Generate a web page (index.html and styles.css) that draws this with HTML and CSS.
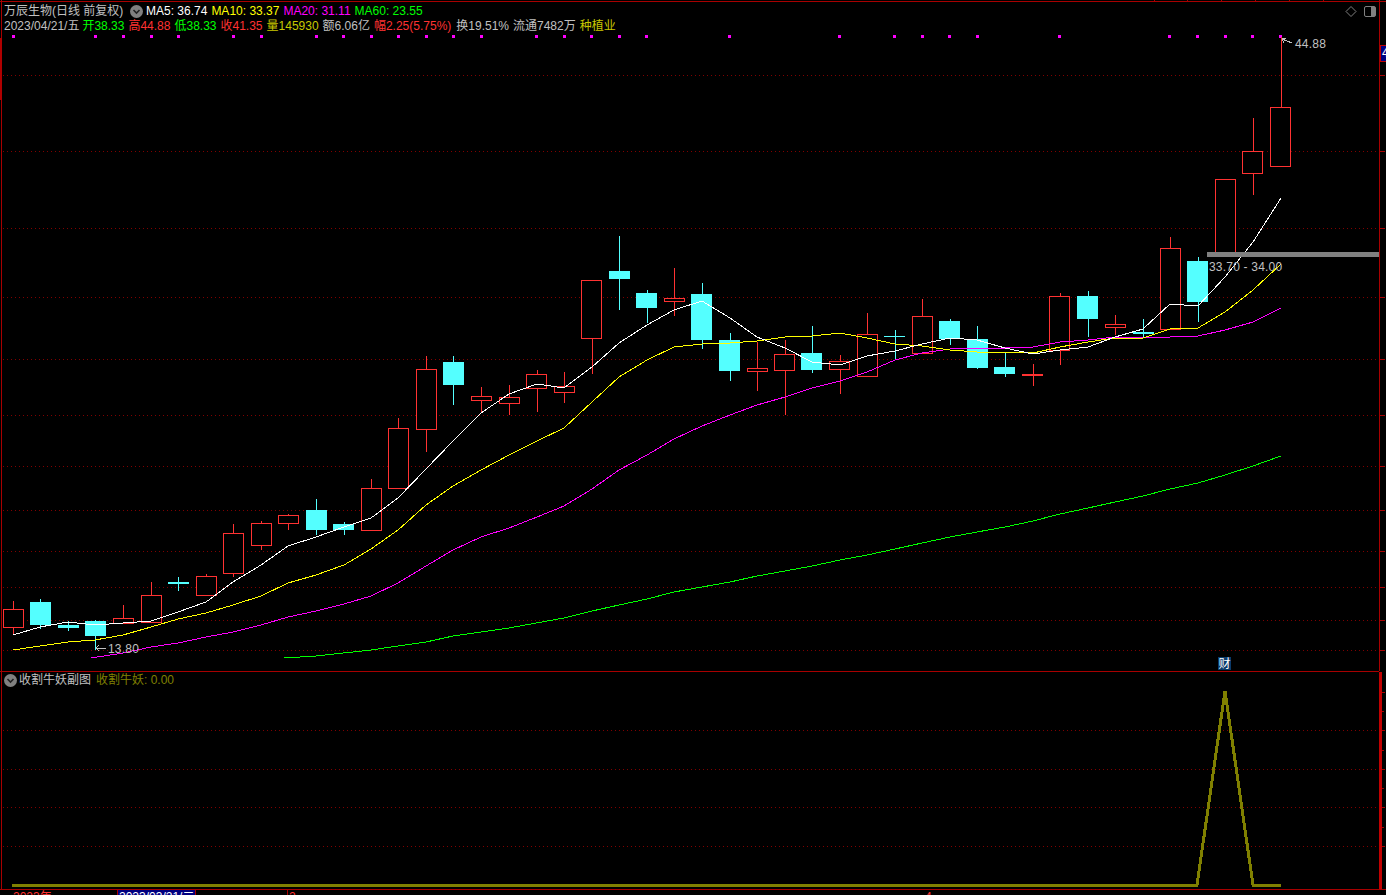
FILE: index.html
```html
<!DOCTYPE html>
<html lang="zh-CN">
<head>
<meta charset="utf-8">
<title>万辰生物 日线</title>
<link rel="stylesheet" href="styles.css">
</head>
<body>
<div class="terminal">
  <section class="panel main-panel">
    <svg class="canvas" width="1386" height="671" viewBox="0 0 1386 671" aria-hidden="true">
      <path class="frame" d="M0 1.5H1386M1379.5 0V671M1.5 0V671"/>
      <path class="frame" d="M1154.5 0V1M1187.5 0V1M1221.5 0V1M1255.5 0V1M1289.5 0V1M1323.5 0V1"/>
      <rect class="left-mark" x="0" y="38" width="2" height="62"/>
      <path class="grid" d="M3 75.5H1379M3 151.5H1379M3 228.5H1379M3 297.5H1379M3 359.5H1379M3 415.5H1379M3 466.5H1379M3 510.5H1379M3 551.5H1379M3 587.5H1379M3 620.5H1379M3 650.5H1379"/>
      <path class="frame" d="M1379 75.5H1385M1379 151.5H1385M1379 228.5H1385M1379 297.5H1385M1379 359.5H1385M1379 415.5H1385M1379 466.5H1385M1379 510.5H1385M1379 551.5H1385M1379 587.5H1385M1379 620.5H1385M1379 650.5H1385"/>
      <rect class="price-badge" x="1380" y="45" width="8" height="16"/>
      <text class="badge-text" x="1382" y="57">4</text>

      <g class="dots">
        <rect x="12" y="35" width="3" height="3"/><rect x="94" y="35" width="3" height="3"/><rect x="122" y="35" width="3" height="3"/><rect x="150" y="35" width="3" height="3"/><rect x="177" y="35" width="3" height="3"/><rect x="232" y="35" width="3" height="3"/><rect x="260" y="35" width="3" height="3"/><rect x="315" y="35" width="3" height="3"/><rect x="342" y="35" width="3" height="3"/><rect x="370" y="35" width="3" height="3"/><rect x="397" y="35" width="3" height="3"/><rect x="425" y="35" width="3" height="3"/><rect x="452" y="35" width="3" height="3"/><rect x="480" y="35" width="3" height="3"/><rect x="535" y="35" width="3" height="3"/><rect x="563" y="35" width="3" height="3"/><rect x="590" y="35" width="3" height="3"/><rect x="618" y="35" width="3" height="3"/><rect x="645" y="35" width="3" height="3"/><rect x="728" y="35" width="3" height="3"/><rect x="838" y="35" width="3" height="3"/><rect x="893" y="35" width="3" height="3"/><rect x="921" y="35" width="3" height="3"/><rect x="948" y="35" width="3" height="3"/><rect x="976" y="35" width="3" height="3"/><rect x="1058" y="35" width="3" height="3"/><rect x="1168" y="35" width="3" height="3"/><rect x="1196" y="35" width="3" height="3"/><rect x="1224" y="35" width="3" height="3"/><rect x="1251" y="35" width="3" height="3"/><rect x="1279" y="35" width="3" height="3"/>
      </g>

      <path class="wick-up" d="M13.5 601V634M123.5 605V623M151.5 582V622M206.5 574V596M233.5 524V577M261.5 521V550M288.5 514V530M371.5 479V530M398.5 418V488M426.5 356V452M481.5 387V412M509.5 385V415M537.5 370V412M564.5 372V403M592.5 280V374M674.5 268V316M757.5 342V391M785.5 340V415M840.5 355V394M867.5 313V377M922.5 299V353M1033.5 364V386M1060.5 293V365M1115.5 315V335M1170.5 237V329M1253.5 118V195M1281.5 37V107"/>
      <path class="wick-down" d="M40.5 599V629M68.5 621V631M95.5 620V650M178.5 577V591M316.5 499V535M344.5 522V535M453.5 356V405M619.5 236V310M647.5 290V323M702.5 283V349M730.5 333V381M812.5 326V373M895.5 330V359M950.5 319V345M977.5 326V369M1005.5 353V377M1088.5 291V337M1143.5 319V338M1198.5 257V322"/>

      <g class="body-up">
        <rect x="3.5" y="609.5" width="20" height="18"/>
        <rect x="113.5" y="618.5" width="20" height="5"/>
        <rect x="141.5" y="595.5" width="20" height="27"/>
        <rect x="196.5" y="576.5" width="20" height="19"/>
        <rect x="223.5" y="533.5" width="20" height="40"/>
        <rect x="251.5" y="523.5" width="20" height="22"/>
        <rect x="278.5" y="515.5" width="20" height="8"/>
        <rect x="361.5" y="488.5" width="20" height="42"/>
        <rect x="388.5" y="428.5" width="20" height="60"/>
        <rect x="416.5" y="369.5" width="20" height="60"/>
        <rect x="471.5" y="396.5" width="20" height="4"/>
        <rect x="499.5" y="397.5" width="20" height="6"/>
        <rect x="526.5" y="374.5" width="20" height="14"/>
        <rect x="554.5" y="386.5" width="20" height="6"/>
        <rect x="581.5" y="280.5" width="20" height="58"/>
        <rect x="664.5" y="298.5" width="20" height="3"/>
        <rect x="747.5" y="368.5" width="20" height="3"/>
        <rect x="774.5" y="354.5" width="20" height="16"/>
        <rect x="829.5" y="361.5" width="20" height="8"/>
        <rect x="857.5" y="334.5" width="20" height="42"/>
        <rect x="912.5" y="316.5" width="20" height="37"/>
        <rect x="1049.5" y="296.5" width="20" height="54"/>
        <rect x="1105.5" y="324.5" width="20" height="3"/>
        <rect x="1160.5" y="248.5" width="20" height="81"/>
        <rect x="1215.5" y="179.5" width="20" height="73"/>
        <rect x="1242.5" y="151.5" width="20" height="22"/>
        <rect x="1270.5" y="107.5" width="20" height="59"/>
      </g>
      <rect class="doji-up" x="1022" y="374" width="21" height="2"/>
      <g class="body-down">
        <rect x="30" y="602" width="21" height="23"/>
        <rect x="58" y="625" width="21" height="3"/>
        <rect x="85" y="621" width="21" height="15"/>
        <rect x="168" y="582" width="21" height="2"/>
        <rect x="306" y="510" width="21" height="20"/>
        <rect x="333" y="524" width="21" height="6"/>
        <rect x="443" y="362" width="21" height="23"/>
        <rect x="609" y="271" width="21" height="8"/>
        <rect x="636" y="293" width="21" height="15"/>
        <rect x="691" y="294" width="21" height="46"/>
        <rect x="719" y="340" width="21" height="31"/>
        <rect x="801" y="353" width="21" height="17"/>
        <rect x="884" y="336" width="21" height="1"/>
        <rect x="939" y="321" width="21" height="18"/>
        <rect x="967" y="339" width="21" height="29"/>
        <rect x="994" y="367" width="21" height="7"/>
        <rect x="1077" y="296" width="21" height="23"/>
        <rect x="1133" y="332" width="21" height="2"/>
        <rect x="1187" y="261" width="21" height="41"/>
      </g>

      <polyline class="ma ma60" points="284,658 316,656 371,650 398,646 426,642 453,636 509,628 564,618 592,611 619,605 647,599 674,592 702,587 730,582 757,576 785,571 812,566 840,560 867,555 895,549 922,543 950,537 977,532 1005,527 1033,521 1060,514 1088,508 1115,502 1143,496 1170,489 1198,483 1225,475 1253,466 1281,456"/>
      <polyline class="ma ma20" points="91,658 123,653 151,647 178,643 206,637 233,632 261,625 288,617 316,611 344,604 371,596 398,583 426,566 453,550 481,537 509,528 537,517 564,506 592,489 619,470 647,455 674,439 702,426 730,415 757,405 785,397 812,388 840,381 867,372 895,360 922,353 950,349 977,348 1005,348 1033,347 1060,342 1088,340 1115,337 1143,338 1170,337 1198,336 1225,330 1253,322 1281,308"/>
      <polyline class="ma ma10" points="13,650 40,646 68,642 95,640 123,635 151,627 178,619 206,613 233,605 261,596 288,583 316,575 344,565 371,549 398,530 426,505 453,486 481,470 509,455 537,441 564,428 592,402 619,377 647,360 674,347 702,344 730,343 757,341 785,337 812,336 840,333 867,338 895,344 922,346 950,350 977,352 1005,352 1033,353 1060,347 1088,342 1115,338 1143,338 1170,329 1198,328 1225,312 1253,290 1281,264"/>
      <polyline class="ma ma5" points="13,635 40,627 68,622 95,625 123,623 151,621 178,612 206,602 233,582 261,565 288,546 316,537 344,527 371,518 398,498 426,469 453,441 481,413 509,394 537,384 564,388 592,367 619,343 647,325 674,310 702,301 730,318 757,337 785,348 812,362 840,365 867,356 895,351 922,344 950,338 977,340 1005,348 1033,354 1060,350 1088,347 1115,337 1143,329 1170,304 1198,306 1225,277 1253,242 1281,198"/>

      <rect class="range-bar" x="1207" y="252" width="172" height="5"/>
      <text class="price-note" x="1209" y="271">33.70 - 34.00</text>
      <path class="pointer" d="M1292 43L1282 39M1282 39L1286 38M1282 39L1284 43"/>
      <text class="price-note" x="1295" y="48">44.88</text>
      <path class="pointer" d="M106 648H96M96 648L99 645M96 648L99 651"/>
      <text class="price-note" x="108" y="653">13.80</text>
      <rect class="fin-badge" x="1218" y="657" width="13" height="13"/>
      <text class="fin-text" x="1218.5" y="668">财</text>

      <path class="tool-line" d="M1351 6.5L1356 11.5L1351 16.5L1346 11.5Z"/>
      <rect class="tool-line" x="1364.5" y="6.5" width="11" height="10" rx="1.5"/>
      <rect class="tool-fill" x="1371" y="7" width="4" height="9"/>
    </svg>

    <header class="legend">
      <div class="legend-row">
        <span class="muted title">万辰生物(日线 前复权)</span>
        <span class="chevron chevron-top"><svg width="13" height="13" viewBox="0 0 13 13" aria-hidden="true"><circle cx="6.5" cy="6.5" r="6.5" class="chevron-disc"/><path d="M3.5 5L6.5 8L9.5 5" class="chevron-mark"/></svg></span>
        <span class="white">MA5: 36.74</span>
        <span class="yellow">MA10: 33.37</span>
        <span class="magenta">MA20: 31.11</span>
        <span class="green">MA60: 23.55</span>
      </div>
      <div class="legend-row">
        <span class="muted date">2023/04/21/五</span>
        <span class="green">开38.33</span>
        <span class="red">高44.88</span>
        <span class="green">低38.33</span>
        <span class="red">收41.35</span>
        <span class="olive">量145930</span>
        <span class="muted">额6.06亿</span>
        <span class="red">幅2.25(5.75%)</span>
        <span class="muted turnover">换19.51%</span>
        <span class="muted">流通7482万</span>
        <span class="olive">种植业</span>
      </div>
    </header>
  </section>

  <section class="panel sub-panel">
    <svg class="canvas" width="1386" height="218" viewBox="0 671 1386 218" aria-hidden="true">
      <path class="frame" d="M0 671.5H1379M1.5 671V889"/>
      <path class="grid" d="M3 730.5H1379M3 769.5H1379M3 807.5H1379M3 846.5H1379"/>
      <rect class="sub-axis" x="1379" y="672" width="3" height="217"/>
      <path class="frame" d="M1382 692.5H1385M1382 711.5H1384M1382 730.5H1385M1382 750.5H1384M1382 769.5H1385M1382 788.5H1384M1382 807.5H1385M1382 827.5H1384M1382 846.5H1385"/>
      <polyline class="signal" points="12,885 1197,885 1225,691 1253,885 1281,885"/>
    </svg>
    <div class="legend sub-legend">
      <div class="legend-row">
        <span class="chevron chevron-sub"><svg width="13" height="13" viewBox="0 0 13 13" aria-hidden="true"><circle cx="6.5" cy="6.5" r="6.5" class="chevron-disc"/><path d="M3.5 5L6.5 8L9.5 5" class="chevron-mark"/></svg></span>
        <span class="muted indicator">收割牛妖副图</span>
        <span class="dim-olive">收割牛妖: 0.00</span>
      </div>
    </div>
  </section>

  <footer class="time-axis">
    <span class="tick tick-year">2023年</span>
    <span class="tick tick-active">2023/03/21/二</span>
    <span class="tick tick-month">2</span>
    <span class="tick tick-april">4</span>
  </footer>
</div>
</body>
</html>
```

FILE: styles.css
```css
html, body {
  margin: 0;
  padding: 0;
  background: #000;
}

body {
  font-family: "Liberation Sans", "Noto Sans CJK SC", sans-serif;
  font-size: 12px;
}

.terminal {
  width: 1386px;
  height: 895px;
  overflow: hidden;
  display: flex;
  flex-direction: column;
  background: #000;
}

.panel {
  position: relative;
  flex: none;
}

.main-panel { height: 671px; }
.sub-panel { height: 218px; }

.canvas {
  position: absolute;
  left: 0;
  top: 0;
  display: block;
  shape-rendering: crispEdges;
}

.legend {
  position: relative;
  display: flex;
  flex-direction: column;
  padding: 4px 0 0 4px;
  line-height: 15px;
  white-space: nowrap;
}

.sub-legend { padding: 2px 0 0 4px; }

.legend-row {
  display: flex;
  align-items: center;
  gap: 4px;
  height: 15px;
}

.muted { color: #c0c0c0; }
.white { color: #fff; }
.yellow { color: #ff0; }
.magenta { color: #f0f; }
.green { color: #0f0; }
.red { color: #ff3232; }
.olive { color: #c8c800; }
.dim-olive { color: #808000; }

.title { width: 122px; }
.date { margin-right: -1px; }
.turnover { margin-left: 1px; }
.indicator { margin-right: 1px; }

.chevron {
  display: flex;
  flex: none;
  width: 13px;
  height: 13px;
}

.chevron-top { margin-right: -1px; }
.chevron-sub { margin-right: -2px; }

.chevron-disc { fill: #808080; shape-rendering: geometricPrecision; }
.chevron-mark { fill: none; stroke: #222; stroke-width: 1.6; shape-rendering: geometricPrecision; }

.frame { fill: none; stroke: #a80000; stroke-width: 1; }
.left-mark { fill: #b00000; }
.grid { fill: none; stroke: #800000; stroke-width: 1; stroke-dasharray: 1 3; }
.dots { fill: #f0f; }

.wick-up { fill: none; stroke: #ff3232; stroke-width: 1; }
.wick-down { fill: none; stroke: #54ffff; stroke-width: 1; }
.body-up { fill: #000; stroke: #ff3232; stroke-width: 1; }
.doji-up { fill: #ff3232; }
.body-down { fill: #54ffff; }

.ma { fill: none; stroke-width: 1; }
.ma5 { stroke: #fff; }
.ma10 { stroke: #ff0; }
.ma20 { stroke: #f0f; }
.ma60 { stroke: #0f0; }

.range-bar { fill: #808080; }
.price-note { fill: #c0c0c0; font-size: 12px; letter-spacing: 0.2px; }
.pointer { fill: none; stroke: #c0c0c0; stroke-width: 1; }

.price-badge { fill: #000080; stroke: #c00000; stroke-width: 1; }
.badge-text { fill: #fff; font-size: 12px; }

.fin-badge { fill: #0a3a6a; }
.fin-text { fill: #fff; font-size: 12px; }

.tool-line { fill: none; stroke: #808080; stroke-width: 1; shape-rendering: geometricPrecision; }
.tool-fill { fill: #808080; }

.sub-axis { fill: #c00000; }
.signal { fill: none; stroke: #808000; stroke-width: 3; }

.time-axis {
  position: relative;
  flex: none;
  height: 6px;
  overflow: hidden;
  border-top: 1px solid #a80000;
  box-sizing: border-box;
  background: #000;
}

.tick {
  position: absolute;
  top: 0;
  line-height: 15px;
}

.tick-year { left: 13px; color: #ff3232; }
.tick-active {
  left: 117px;
  width: 79px;
  padding-left: 1px;
  background: #000080;
  color: #fff;
  border-left: 1px solid #a80000;
  border-right: 1px solid #a80000;
  box-sizing: border-box;
}
.tick-month {
  left: 287px;
  padding-left: 1px;
  border-left: 1px solid #a80000;
  color: #ff3232;
}
.tick-april { left: 925px; color: #ff3232; }
```
